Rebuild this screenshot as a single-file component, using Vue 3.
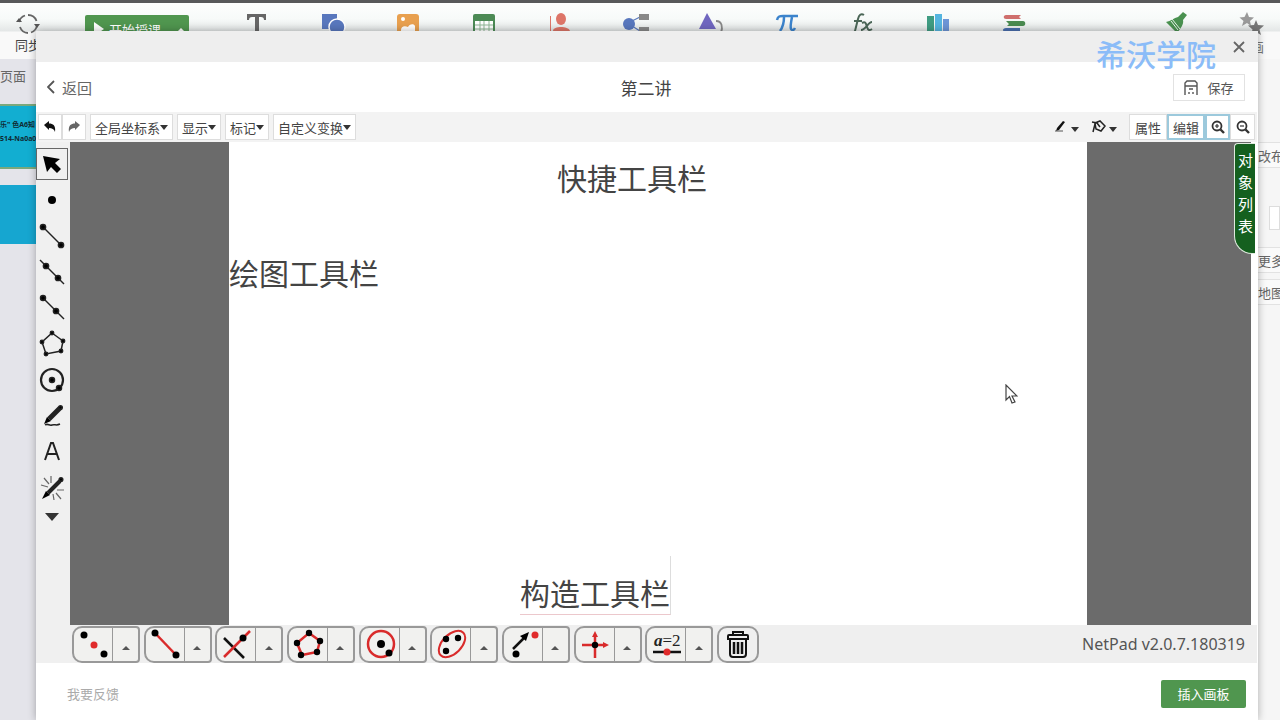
<script setup>
const ribbon = ['text', 'shape', 'image', 'table', 'person', 'mind', 'triangle', 'pi', 'fx', 'bars', 'books']
const menus = ['全局坐标系', '显示', '标记', '自定义变换']
const tools = [
  { id: 'select', label: '选择' },
  { id: 'point', label: '点' },
  { id: 'segment', label: '线段' },
  { id: 'line', label: '直线' },
  { id: 'ray', label: '射线' },
  { id: 'polygon', label: '多边形' },
  { id: 'circle', label: '圆' },
  { id: 'pen', label: '画笔' },
  { id: 'letter', label: '文本' },
  { id: 'magic', label: '智能画笔' }
]
const builders = [
  { id: 'midpoint', label: '中点' },
  { id: 'segment', label: '线段' },
  { id: 'cross', label: '交点' },
  { id: 'polygon', label: '多边形' },
  { id: 'circle', label: '圆' },
  { id: 'ellipse', label: '椭圆' },
  { id: 'vector', label: '变换' },
  { id: 'axes', label: '坐标系' },
  { id: 'param', label: '参数' }
]
</script>

<template>
  <div class="screen">
    <div class="app">
      <div class="strip"></div>
      <header class="ribbon">
        <button class="sync">
          <svg width="24" height="24" viewBox="0 0 24 24" fill="none" stroke="#666" stroke-width="1.8">
            <path d="M3 10A9 9 0 0 1 9 3.500M12 3A9 9 0 0 1 20.500 9M21 13A9 9 0 0 1 15 20.500M12 21A9 9 0 0 1 4 15" />
            <path d="M0 10h6l-3-4zM18 12h6l-3 4z" fill="#555" stroke="none" />
          </svg>
          <span>同步</span>
        </button>
        <button class="start">
          <svg width="12" height="14" viewBox="0 0 12 14"><path d="M1 0l10 7L1 14z" fill="#fff" /></svg>
          <span>开始授课</span>
          <svg class="start-caret" width="8" height="5" viewBox="0 0 8 5"><path d="M0 5l4-4 4 4z" fill="#fff" /></svg>
        </button>
        <div class="inserts">
          <button v-for="r in ribbon" :key="r" class="insert" :aria-label="r">
            <svg width="26" height="26" viewBox="0 0 26 26">
              <path v-if="r === 'text'" d="M3 1h19v6h-2c0-2-1-3-3-3h-2v18h-4V4H8C6 4 5 5 5 7H3z" fill="#666" />
              <g v-else-if="r === 'shape'">
                <rect x="2" y="1" width="15" height="15" fill="#5877bd" />
                <circle cx="17" cy="14" r="8" fill="#5877bd" stroke="#fff" stroke-width="1.500" />
              </g>
              <g v-else-if="r === 'image'">
                <rect x="2" y="1" width="22" height="22" rx="3" fill="#e8a04f" />
                <circle cx="8" cy="6" r="2" fill="#fff" />
                <path d="M6 17c0-3 3-5 7-3 1-3 6-4 7-1v6H6z" fill="#fff" />
              </g>
              <g v-else-if="r === 'table'">
                <rect x="2" y="1" width="22" height="22" rx="2" fill="#4c8a55" />
                <path d="M4 8h18v13H4z" fill="#fff" />
                <path d="M4 12h18M4 16h18M9 8v13M13 8v13M18 8v13" stroke="#8fb795" />
              </g>
              <g v-else-if="r === 'person'" fill="#dd7568">
                <path d="M3 3h1v15h20v3H3z" />
                <ellipse cx="14" cy="6" rx="5" ry="6" />
                <path d="M6 18c0-3 4-4 8-4s8 1 9 4z" />
              </g>
              <g v-else-if="r === 'mind'">
                <path d="M9 8l8-4M9 13l8 5" stroke="#5877bd" stroke-width="1.200" />
                <circle cx="6" cy="11" r="6" fill="#5877bd" />
                <rect x="16" y="1" width="10" height="6" fill="#888" />
                <rect x="16" y="14" width="10" height="6" fill="#888" />
              </g>
              <g v-else-if="r === 'triangle'">
                <path d="M9 0l9 16H1z" fill="#6f66bf" />
                <path d="M18 8c6 0 7 6 5 12" fill="none" stroke="#888" stroke-width="1.800" />
              </g>
              <g v-else-if="r === 'pi'" fill="none" stroke="#3b83cc">
                <path d="M3 7c1-4 3-4 6-4h15" stroke-width="2.500" />
                <path d="M10 4c0 6-1 10-4 14M18 4c-1 5-2 10-1 12 1 2 3 1 4-1" stroke-width="2.500" />
              </g>
              <g v-else-if="r === 'fx'" fill="none" stroke="#4b6657" stroke-width="2">
                <path d="M14 2c-3-2-5 0-6 4L5 18c-1 2-2 2-3 2M4 8h8" />
                <path d="M12 10c4-2 4 1 5 4s2 4 5 2M22 9c-4 0-6 8-11 8" />
              </g>
              <g v-else-if="r === 'bars'">
                <rect x="2" y="3" width="7" height="18" fill="#3f9c82" />
                <rect x="10" y="1" width="7" height="20" fill="#55b5e0" />
                <rect x="18" y="6" width="6" height="15" fill="#6d95d6" />
              </g>
              <g v-else>
                <path d="M20 2H5c-3 0-3 4 0 4h15l-2-2z" fill="#cf6f6d" />
                <path d="M5 8h17c3 0 3 5 0 5H6l2-2z" fill="#4a8a50" />
                <path d="M19 15H5c-4 0-4 4 0 4h14z" fill="#496fae" />
              </g>
            </svg>
          </button>
        </div>
        <button class="extra" aria-label="格式刷">
          <svg width="26" height="26" viewBox="0 0 26 26">
            <path d="M20 0l4 3-4 5c1 4-2 8-6 13L3 10c5-1 8-4 12-5z" fill="#4a9150" />
            <path d="M9 7l8 10M8 9l7 9" stroke="#e9f3ea" stroke-width="1" />
          </svg>
        </button>
        <button class="extra stars">
          <svg width="26" height="26" viewBox="0 0 26 26">
            <path d="M9 0l2 5 5 .500-4 3.500 1 5-4-3-5 3 1.500-5-4-3.500 5-.500z" fill="#999" />
            <path d="M18 8l2 5 6 .500-4.500 4 1.500 5.500-5-3-5 3 1.500-5.500-4.500-4 6-.500z" fill="#777" />
          </svg>
          <span>动画</span>
        </button>
      </header>
      <div class="below">
        <aside class="pages">
          <div class="pages-title">页面</div>
          <div class="thumb current"><b>乐" 色A6知</b><b>514-Na0a0</b></div>
          <div class="thumb"></div>
        </aside>
        <aside class="props">
          <div class="prop p1">改布</div>
          <div class="field"></div>
          <div class="prop p2">更多</div>
          <div class="prop p3">地图</div>
        </aside>
      </div>
    </div>

    <section class="dialog">
      <div class="titlebar">
        <button class="close" aria-label="关闭">
          <svg width="12" height="12" viewBox="0 0 12 12"><path d="M1 1l10 10M11 1L1 11" stroke="#666" stroke-width="1.800" /></svg>
        </button>
      </div>
      <div class="head">
        <button class="back">
          <svg width="8" height="14" viewBox="0 0 8 14"><path d="M7 1L1 7l6 6" fill="none" stroke="#555" stroke-width="1.800" /></svg>
          返回
        </button>
        <h1>第二讲</h1>
        <button class="save">
          <svg width="14" height="15" viewBox="0 0 14 15" fill="none" stroke="#555" stroke-width="1.400">
            <path d="M1 15V3l2-2h8l2 2v12M1 6h12M5 9h4M5 12v2M9 12v2" />
          </svg>
          保存
        </button>
      </div>

      <div class="toolbar">
        <button class="tb undo" aria-label="撤销">
          <svg width="12" height="12" viewBox="0 0 12 12"><path d="M0 4l5-4v2.500c4 0 7 2 6 8.500-1-3-3-4-6-4v2z" fill="#111" /></svg>
        </button>
        <button class="tb redo" aria-label="重做">
          <svg width="12" height="12" viewBox="0 0 12 12"><path d="M12 4L7 0v2.500C3 2.500 0 4.500 1 11c1-3 3-4 6-4v2z" fill="#666" /></svg>
        </button>
        <button v-for="m in menus" :key="m" class="tb menu">
          {{ m }}<svg width="8" height="5" viewBox="0 0 8 5"><path d="M0 0h8L4 5z" fill="#333" /></svg>
        </button>
        <span class="spring"></span>
        <button class="flat" aria-label="线条颜色">
          <svg width="14" height="14" viewBox="0 0 14 14"><path d="M9 1l2 1-6 8-3 1 1-3z" fill="#111" /><path d="M1 11h8" stroke="#555" /></svg>
          <svg class="low" width="8" height="5" viewBox="0 0 8 5"><path d="M0 0h8L4 5z" fill="#333" /></svg>
        </button>
        <button class="flat" aria-label="填充颜色">
          <svg width="15" height="15" viewBox="0 0 15 15" fill="none" stroke="#222" stroke-width="1.500">
            <path d="M4 3l5-2 5 5-4 5-5-2zM1 2l5 1 3 4M4 4l-2 8" />
          </svg>
          <svg class="low" width="8" height="5" viewBox="0 0 8 5"><path d="M0 0h8L4 5z" fill="#333" /></svg>
        </button>
        <div class="modes">
          <button class="tb mode">属性</button>
          <button class="tb mode on">编辑</button>
          <button class="tb zoom on" aria-label="放大">
            <svg width="14" height="14" viewBox="0 0 14 14" fill="none" stroke="#333" stroke-width="1.800"><circle cx="6" cy="6" r="4.500" /><path d="M9.500 9.500L13 13" stroke-width="2.400" /><path d="M4 6h4M6 4v4" stroke-width="1.200" /></svg>
          </button>
          <button class="tb zoom" aria-label="缩小">
            <svg width="14" height="14" viewBox="0 0 14 14" fill="none" stroke="#333" stroke-width="1.800"><circle cx="6" cy="6" r="4.500" /><path d="M9.500 9.500L13 13" stroke-width="2.400" /><path d="M4 6h4" stroke-width="1.200" /></svg>
          </button>
        </div>
      </div>

      <div class="work">
        <nav class="tools">
          <button v-for="t in tools" :key="t.id" class="tool" :class="{ active: t.id === 'select' }" :aria-label="t.label">
            <svg width="28" height="28" viewBox="0 0 28 28" stroke="#222" stroke-width="1.500">
              <path v-if="t.id === 'select'" d="M5 6l17 3-5 4 6 6-4 4-6-6-4 5z" fill="#000" stroke="none" />
              <circle v-else-if="t.id === 'point'" cx="14" cy="14" r="4" stroke="none" />
              <g v-else-if="t.id === 'segment'"><path d="M5 5l18 18" /><circle cx="5" cy="5" r="2.600" /><circle cx="23" cy="23" r="2.600" /></g>
              <g v-else-if="t.id === 'line'"><path d="M2 2l24 24" /><circle cx="8" cy="8" r="2.600" /><circle cx="20" cy="20" r="2.600" /></g>
              <g v-else-if="t.id === 'ray'"><path d="M5 4l21 21" /><circle cx="5" cy="4" r="2.500" /><circle cx="18" cy="17" r="2.600" /></g>
              <g v-else-if="t.id === 'polygon'">
                <path d="M14 3l11 8-2 10-15 3L4 12z" fill="none" />
                <circle cx="14" cy="3" r="1.700" /><circle cx="25" cy="11" r="1.700" /><circle cx="23" cy="21" r="1.700" /><circle cx="8" cy="24" r="1.700" /><circle cx="4" cy="12" r="1.700" />
              </g>
              <g v-else-if="t.id === 'circle'"><circle cx="14" cy="14" r="11" fill="none" stroke-width="2.200" /><circle cx="14" cy="14" r="2.500" /><circle cx="21" cy="22" r="2.500" /></g>
              <g v-else-if="t.id === 'pen'">
                <path d="M11 17L22 6" stroke-width="5" /><circle cx="22.500" cy="5.500" r="1.800" /><path d="M6 22l3-7 4 4z" stroke="none" />
                <path d="M7 23c3-2 4 1 7 0s4 1 8-1" fill="none" />
              </g>
              <path v-else-if="t.id === 'letter'" d="M7 22l6-17h2l6 17M9.500 16h9" fill="none" stroke-width="2" />
              <g v-else>
                <path d="M10 19L22 7" stroke-width="4" /><circle cx="23" cy="5.500" r="1.800" /><path d="M4 25l4-8 4 4z" stroke="none" />
                <path d="M3 11l7 2M6 4l5 6M13 2v7M19 16h7M18 19l5 6M15 20l1 6" stroke="#666" stroke-width="1.200" />
              </g>
            </svg>
          </button>
          <button class="more" aria-label="更多"><svg width="14" height="8" viewBox="0 0 14 8"><path d="M0 0h14L7 8z" fill="#333" /></svg></button>
        </nav>

        <div class="main">
          <div class="stage">
            <div class="paper">
              <p class="note quick">快捷工具栏</p>
              <p class="note draw">绘图工具栏</p>
              <p class="note build">构造工具栏</p>
            </div>
            <button class="objects"><span>对</span><span>象</span><span>列</span><span>表</span></button>
          </div>
          <div class="bottom">
            <div class="builders">
              <div v-for="b in builders" :key="b.id" class="group">
                <button class="pick" :aria-label="b.label">
                  <svg width="32" height="32" viewBox="0 0 32 32" fill="none" stroke-width="2">
                    <g v-if="b.id === 'midpoint'" fill="#000"><circle cx="7" cy="7" r="3.500" /><circle cx="17" cy="17" r="3.500" fill="#e02b2b" /><circle cx="27" cy="26" r="3.500" /></g>
                    <g v-else-if="b.id === 'segment'"><path d="M6 5l21 22" stroke="#d92b2b" stroke-width="2.500" /><g fill="#000"><circle cx="6" cy="5" r="3.500" /><circle cx="27" cy="27" r="3.500" /></g></g>
                    <g v-else-if="b.id === 'cross'"><path d="M4 10l20 20" stroke="#111" stroke-width="2.500" /><path d="M4 29L30 3" stroke="#d92b2b" stroke-width="2.500" /><circle cx="23" cy="10" r="3.500" fill="#000" /></g>
                    <g v-else-if="b.id === 'polygon'">
                      <path d="M17 5l11 8-3 11-15 3L5 15z" stroke="#d92b2b" stroke-width="2.500" />
                      <g fill="#000"><circle cx="17" cy="5" r="3.200" /><circle cx="28" cy="13" r="3.200" /><circle cx="25" cy="24" r="3.200" /><circle cx="9" cy="27" r="3.200" /><circle cx="5" cy="15" r="3.200" /></g>
                    </g>
                    <g v-else-if="b.id === 'circle'"><circle cx="17" cy="16" r="13" stroke="#d92b2b" stroke-width="2.500" /><g fill="#000"><circle cx="17" cy="16" r="4" /><circle cx="25" cy="25" r="3.500" /></g></g>
                    <g v-else-if="b.id === 'ellipse'"><ellipse cx="17" cy="16" rx="16" ry="9.500" transform="rotate(-45 17 16)" stroke="#d92b2b" /><g fill="#000"><circle cx="11" cy="11" r="3.200" /><circle cx="23" cy="10" r="3.200" /><circle cx="11" cy="23" r="3.200" /></g></g>
                    <g v-else-if="b.id === 'vector'"><path d="M6 21L19 8" stroke="#111" stroke-width="2.500" /><path d="M22 4l-3 9-6-5z" fill="#000" /><circle cx="9" cy="26" r="3.500" fill="#000" /><circle cx="28" cy="7" r="3.500" fill="#e02b2b" /></g>
                    <g v-else-if="b.id === 'axes'"><path d="M3 17h23M16 30V7" stroke="#d92b2b" stroke-width="2.500" /><path d="M24 14l6 3-6 3zM13 9l3-6 3 6z" fill="#d92b2b" /><circle cx="16" cy="17" r="3.200" fill="#000" /></g>
                    <g v-else><text x="4" y="18" class="formula"><tspan class="var">a</tspan>=2</text><path d="M3 24h28" stroke="#111" stroke-width="2.500" /><circle cx="17" cy="24" r="3.500" fill="#e02b2b" /></g>
                  </svg>
                </button>
                <button class="drop" :aria-label="b.label + '更多'"><svg width="8" height="4" viewBox="0 0 8 4"><path d="M0 4l4-4 4 4z" fill="#555" /></svg></button>
              </div>
              <button class="trash" aria-label="删除">
                <svg width="26" height="28" viewBox="0 0 26 28" fill="none" stroke="#111" stroke-width="2">
                  <path d="M8 5V2h10v3M3 9V6c0-1 0-1 1-1h18c1 0 1 0 1 1v3zM5 9v15c0 2 1 3 3 3h10c2 0 3-1 3-3V9" /><path d="M9 12v12M13 12v12M17 12v12" stroke-width="2.500" />
                </svg>
              </button>
            </div>
            <span class="version">NetPad v2.0.7.180319</span>
          </div>
        </div>
      </div>

      <footer class="foot">
        <a href="#">我要反馈</a>
        <button class="insert-board">插入画板</button>
      </footer>
    </section>

    <div class="watermark">希沃学院</div>
    <svg class="pointer" width="13" height="20" viewBox="0 0 13 20"><path d="M1 1v15l3.500-3.500L7 19l3-1-3-6h5z" fill="#fff" stroke="#444" stroke-width="1.200" /></svg>
  </div>
</template>

<style>
body {
  margin: 0;
}
</style>

<style scoped>
.screen {
  position: relative;
  min-height: 100vh;
  overflow: hidden;
  display: flex;
  font-family: "Noto Sans", "Noto Sans CJK SC", sans-serif;
  font-size: 13px;
  color: #444;
}
.screen * {
  box-sizing: border-box;
}
button {
  margin: 0;
  padding: 0;
  border: 0;
  background: none;
  font: inherit;
  color: inherit;
  white-space: nowrap;
}
svg {
  display: block;
  flex: none;
}
.app {
  flex: 1;
  display: flex;
  flex-direction: column;
  background: #e9e9ed;
}
.strip {
  height: 3px;
  background: #58595b;
}
.ribbon {
  height: 56px;
  display: flex;
  align-items: flex-start;
  padding-top: 9px;
  background: linear-gradient(#fdfefe 0, #f7faf9 16px, #e4e7e7 28px, #f9f9f9 29px);
}
.sync {
  width: 36px;
  height: 44px;
  margin-left: 10px;
  display: flex;
  flex-direction: column;
  align-items: center;
  line-height: 18px;
}
.start {
  width: 104px;
  height: 28px;
  margin: 3px 0 0 39px;
  display: flex;
  align-items: center;
  gap: 4px;
  padding-left: 8px;
  border-radius: 2px;
  background: #50964f;
  color: #fff;
}
.start-caret {
  margin-left: 12px;
}
.inserts {
  flex: 1;
  display: flex;
  margin: 1px 109px 0 30px;
}
.insert {
  flex: 1;
  display: flex;
  justify-content: center;
}
.extra {
  width: 30px;
  display: flex;
  flex-direction: column;
  align-items: center;
}
.stars {
  margin: 0 14px 0 45px;
  line-height: 18px;
  color: #777;
}
.below {
  flex: 1;
  display: flex;
  justify-content: space-between;
}
.pages {
  width: 36px;
  background: #e4e4ea;
}
.pages-title {
  height: 45px;
  padding-top: 7px;
  line-height: 20px;
  color: #666;
}
.thumb {
  height: 59px;
  background: #16a6d0;
}
.thumb.current {
  height: 65px;
  margin-bottom: 16px;
  padding-top: 12px;
  border-top: 2px solid #7ba87c;
  border-bottom: 2px solid #7ba87c;
  background: #12aed1;
  overflow: hidden;
  font-size: 7px;
  line-height: 14px;
  color: #102a33;
}
.thumb b {
  display: block;
  white-space: nowrap;
}
.props {
  width: 22px;
  overflow: hidden;
  background: #f6f6f6;
  color: #666;
  white-space: nowrap;
}
.prop {
  height: 26px;
  line-height: 26px;
  border-top: 1px solid #e2e2e2;
  border-bottom: 1px solid #e2e2e2;
  background: #fafafa;
}
.p1 {
  margin-top: 83px;
}
.field {
  height: 24px;
  margin: 38px 0 0 11px;
  border: 1px solid #ddd;
  background: #fff;
}
.p2 {
  margin-top: 17px;
}
.p3 {
  margin-top: 6px;
}
.dialog {
  position: absolute;
  top: 31px;
  right: 22px;
  bottom: 0;
  left: 36px;
  display: flex;
  flex-direction: column;
  background: #fff;
  box-shadow: 0 0 8px rgba(0, 0, 0, 0.3);
}
.titlebar {
  height: 31px;
  display: flex;
  justify-content: flex-end;
  align-items: center;
  padding-right: 13px;
  background: #eee;
}
.head {
  height: 50px;
  display: grid;
  grid-template-columns: 1fr auto 1fr;
  align-items: center;
  padding: 0 13px 0 11px;
}
.back {
  justify-self: start;
  display: flex;
  align-items: center;
  gap: 7px;
  font-size: 15px;
  color: #666;
}
h1 {
  margin: 0;
  font-size: 17px;
  font-weight: 400;
}
.save {
  justify-self: end;
  width: 72px;
  height: 27px;
  display: flex;
  align-items: center;
  justify-content: center;
  gap: 9px;
  border: 1px solid #e2e2e2;
  color: #555;
}
.toolbar {
  height: 30px;
  display: flex;
  align-items: center;
  gap: 4px;
  padding: 0 2px;
  margin-right: 1px;
  background: #f3f3f3;
}
.tb {
  height: 26px;
  display: flex;
  align-items: center;
  justify-content: center;
  border: 1px solid #ddd;
  background: #fff;
}
.undo,
.redo {
  width: 24px;
}
.undo {
  margin-right: -4px;
}
.menu {
  padding: 0 4px;
}
.spring {
  flex: 1;
}
.flat {
  display: flex;
  align-items: center;
  gap: 3px;
  margin-right: 8px;
}
.flat .low {
  margin-top: 5px;
}
.modes {
  display: flex;
}
.mode {
  width: 38px;
}
.zoom {
  width: 25px;
}
.tb.on {
  border: 2px solid #9cc9dc;
}
.work {
  flex: 1;
  display: flex;
  min-height: 0;
}
.tools {
  width: 34px;
  display: flex;
  flex-direction: column;
  align-items: center;
  gap: 4px;
  padding: 6px 2px 0 0;
  background: #f0f0f0;
}
.tool {
  width: 32px;
  height: 32px;
  flex: none;
  display: flex;
  align-items: center;
  justify-content: center;
  border: 1px solid transparent;
}
.tool.active {
  border-color: #666;
}
.more {
  margin-top: 5px;
}
.main {
  flex: 1;
  display: flex;
  flex-direction: column;
}
.stage {
  position: relative;
  flex: 1;
  margin-right: 7px;
  padding: 0 164px 0 159px;
  background: #6b6b6b;
}
.paper {
  position: relative;
  height: 100%;
  background: #fff;
}
.note {
  position: absolute;
  margin: 0;
  font-size: 30px;
  line-height: 40px;
  white-space: nowrap;
  color: #444;
}
.quick {
  top: 17px;
  left: 328px;
}
.draw {
  top: 112px;
  left: 0;
}
.build {
  top: 414px;
  left: 291px;
  padding-top: 18px;
  border-right: 1px solid #ddd;
  border-bottom: 1px solid #ecc8cc;
}
.objects {
  position: absolute;
  top: 1px;
  right: -4px;
  width: 21px;
  height: 111px;
  padding: 5px 0 0 1px;
  display: flex;
  flex-direction: column;
  align-items: center;
  border: 1px solid #dfeadf;
  border-right: 0;
  border-radius: 4px 0 0 18px;
  background: #15601f;
  color: #fff;
  font-size: 15px;
  line-height: 22px;
}
.bottom {
  height: 38px;
  display: flex;
  align-items: center;
  justify-content: space-between;
  padding: 0 12px 0 2px;
  margin-right: 1px;
  background: #efefef;
}
.builders {
  flex: 0 1 687px;
  display: flex;
  justify-content: space-between;
}
.group {
  width: 68px;
  height: 37px;
  display: flex;
  border: 2px solid #999;
  border-radius: 10px 4px 4px 10px;
  background: #f1f1ef;
}
.pick {
  width: 39px;
  display: flex;
  align-items: center;
  justify-content: center;
  border-right: 1px solid #999;
}
.drop {
  flex: 1;
  display: flex;
  align-items: center;
  justify-content: center;
  padding-top: 8px;
}
.formula {
  font-family: "Liberation Serif", serif;
  font-size: 17px;
  fill: #222;
}
.var {
  font-style: italic;
  font-weight: 700;
}
.trash {
  width: 42px;
  height: 37px;
  display: flex;
  align-items: center;
  justify-content: center;
  border: 2px solid #999;
  border-radius: 10px;
}
.version {
  font-size: 16px;
  color: #555;
}
.foot {
  height: 57px;
  display: flex;
  align-items: center;
  justify-content: space-between;
  padding: 4px 12px 0 31px;
}
.foot a {
  color: #aaa;
  text-decoration: none;
}
.insert-board {
  width: 85px;
  height: 28px;
  border-radius: 2px;
  background: #50964f;
  color: #fff;
}
.watermark {
  position: absolute;
  top: 35px;
  right: 64px;
  font-size: 30px;
  line-height: 40px;
  font-weight: 500;
  color: #8bbcf8;
}
.pointer {
  position: absolute;
  top: 384px;
  left: 1005px;
}
</style>
